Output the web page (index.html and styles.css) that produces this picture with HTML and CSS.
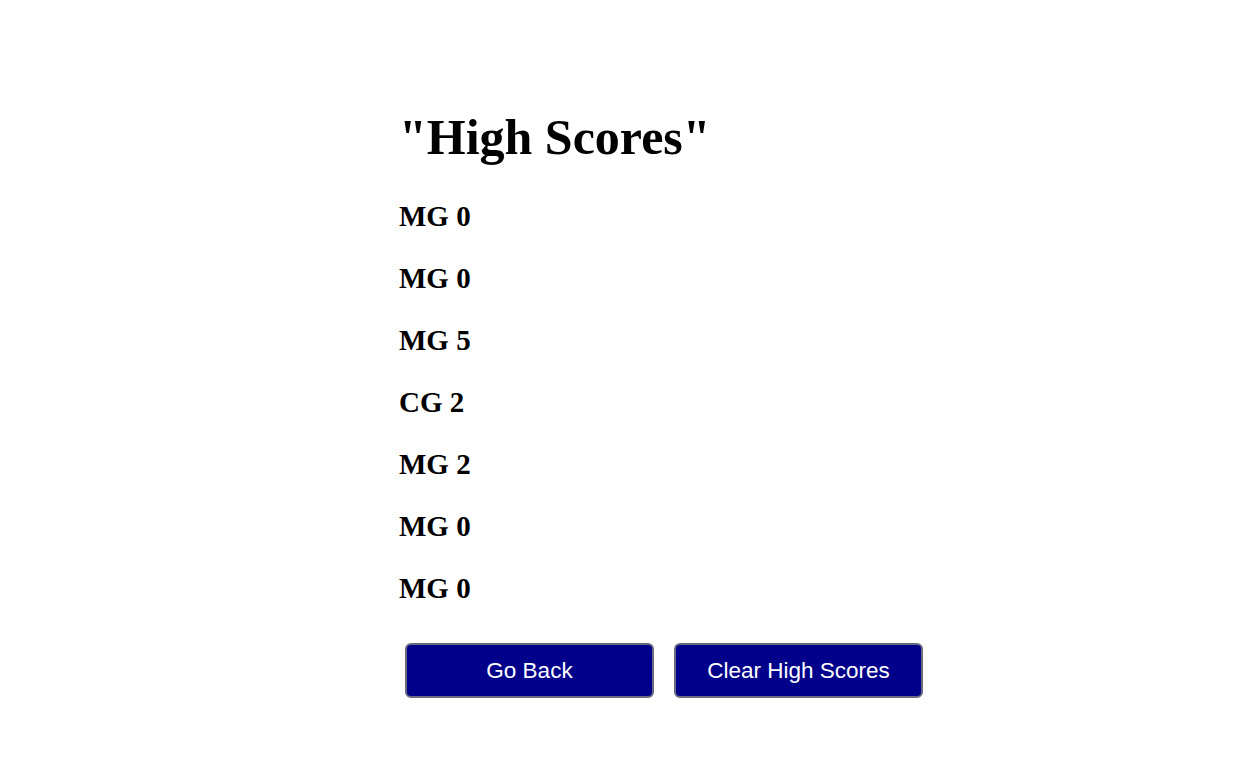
FILE: index.html
```html
<!DOCTYPE html>
<html>
<head>
<meta charset="utf-8">
<link rel="stylesheet" href="styles.css">
</head>
<body>
<main class="container">
  <h1 class="title">"High Scores"</h1>
  <ul class="scores">
    <li class="score">MG 0</li>
    <li class="score">MG 0</li>
    <li class="score">MG 5</li>
    <li class="score">CG 2</li>
    <li class="score">MG 2</li>
    <li class="score">MG 0</li>
    <li class="score">MG 0</li>
  </ul>
  <div class="actions">
    <button class="btn">Go Back</button>
    <button class="btn">Clear High Scores</button>
  </div>
</main>
</body>
</html>
```

FILE: styles.css
```css
html, body {
  margin: 0;
  padding: 0;
  background: #ffffff;
}
body {
  font-family: "Liberation Serif", "Times New Roman", serif;
  color: #000;
}
.container {
  width: 459px;
  margin: 0 auto;
  padding-top: 108px;
}
.title {
  font-size: 50px;
  font-weight: bold;
  margin: 0 0 34px 0;
  line-height: 58px;
}
.scores {
  list-style: none;
  margin: 0;
  padding: 0;
  display: flex;
  flex-direction: column;
  gap: 29px;
}
.score {
  font-size: 29px;
  font-weight: bold;
  line-height: 33px;
}
.actions {
  display: flex;
  gap: 20px;
  padding-left: 6px;
  margin-top: 38px;
}
.btn {
  flex: none;
  width: 249px;
  height: 55px;
  background: #00008b;
  color: #fff;
  font-family: "Liberation Sans", Arial, sans-serif;
  font-size: 22.5px;
  border: 2px solid #6b6b80;
  border-radius: 6px;
  padding: 0;
}
```
